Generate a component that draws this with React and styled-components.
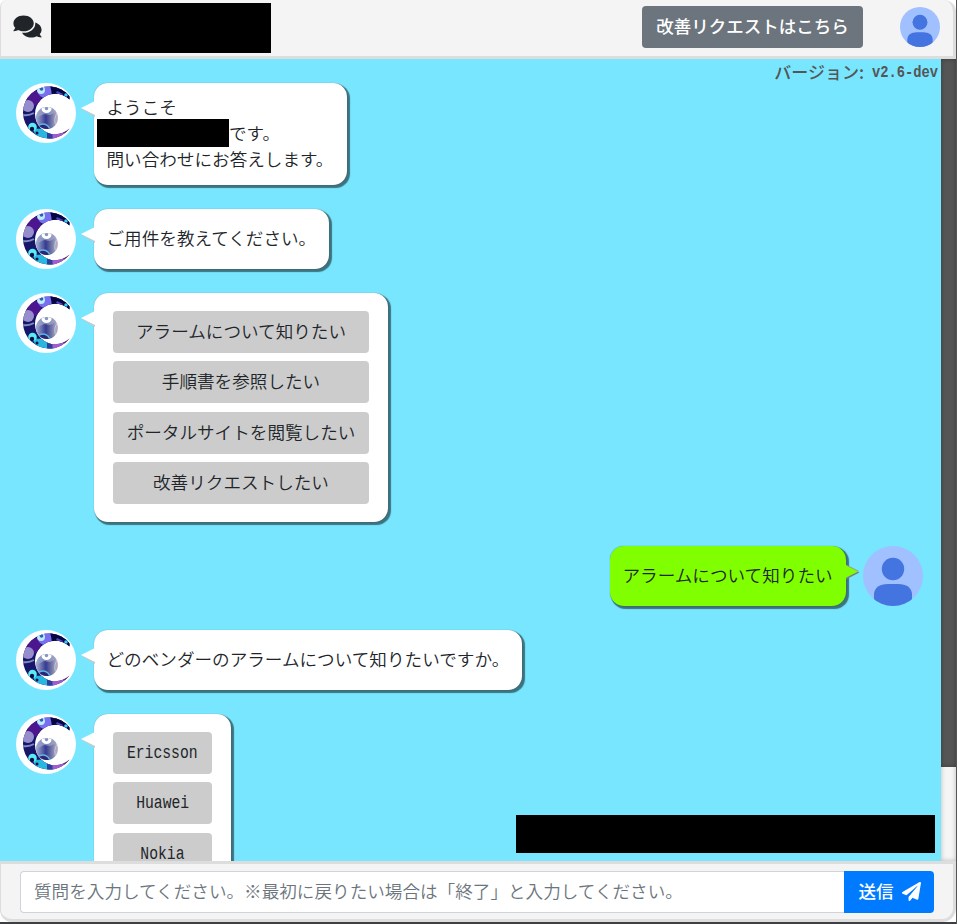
import React from 'react';
import styled, { createGlobalStyle, css } from 'styled-components';
import { FaComments, FaPaperPlane } from 'react-icons/fa';

const GlobalStyle = createGlobalStyle`
  *, *::before, *::after { box-sizing: border-box; }
  body {
    margin: 0;
    background: #4a4a4a;
    color: #212529;
    font-family: 'Noto Sans CJK JP', 'Noto Sans', sans-serif;
    font-size: 17.6px;
    font-weight: 350;
    line-height: 26px;
    overflow: hidden;
  }
  button, input { font: inherit; }
`;

const Page = styled.div`
  width: 957px;
  height: 924px;
  padding-right: 1px;
  display: flex;
  flex-direction: column;
  background: linear-gradient(#fff 0 922px, #3d3f42 922px) no-repeat 0 0 / 956px 924px, #555;
`;

const Header = styled.header`
  height: 59px;
  flex: none;
  display: flex;
  align-items: center;
  padding: 0 13px 3px 12px;
  background: #f4f4f4;
  border: solid #ddd;
  border-width: 0 3px 3px 1px;
  border-radius: 7px 12px 0 0;
`;

const ChatMark = styled(FaComments)`
  width: 29px;
  height: 25px;
  flex: none;
`;

const Redaction = styled.span`
  display: block;
  flex: none;
  width: ${(p) => p.$w}px;
  height: ${(p) => p.$h}px;
  background: #000;
`;

const TitleRedaction = styled(Redaction)`
  margin: 3px auto 0 9px;
`;

const RequestButton = styled.button`
  width: 221px;
  height: 42px;
  margin-right: 37px;
  padding: 0 0 1px;
  border: 0;
  border-radius: 4px;
  background: #6c757d;
  color: #fff;
  font-size: 17.5px;
  font-weight: 500;
  white-space: nowrap;
`;

const Chat = styled.main`
  height: 802px;
  flex: none;
  display: flex;
  position: relative;
`;

const Messages = styled.div`
  width: 941px;
  height: 802px;
  overflow: hidden;
  padding: 24px 18px 0 16px;
  background: #78e6ff;
  display: flex;
  flex-direction: column;
  gap: 24px;
`;

const Scrollbar = styled.div`
  width: 15px;
  height: 802px;
  background: #f5f5f5;
  box-shadow: inset 0 0 5px rgba(0, 0, 0, 0.25);
`;

const Thumb = styled.div`
  height: 708px;
  background: #555;
  box-shadow: inset 0 0 5px rgba(0, 0, 0, 0.3);
`;

const Version = styled.div`
  position: absolute;
  top: -2px;
  right: 18px;
  display: flex;
  align-items: center;
  color: #555;
  font-size: 17px;
  font-weight: 500;
`;

const VersionNumber = styled.span`
  width: 66px;
  margin-left: 8px;
  white-space: nowrap;
`;

const Row = styled.div`
  flex: none;
  display: flex;
  align-items: flex-start;
  gap: ${(p) => (p.$user ? 17 : 18)}px;
  justify-content: ${(p) => (p.$user ? 'flex-end' : 'flex-start')};
`;

const Bubble = styled.div`
  position: relative;
  width: ${(p) => p.$w}px;
  height: ${(p) => p.$h || 60}px;
  padding: ${(p) => p.$pad || '15.5px 12.5px'};
  border-radius: 14px;
  background: ${(p) => (p.$user ? '#7fff00' : '#fff')};
  box-shadow: 2px 2px 1px 0.5px rgba(0, 0, 0, 0.5), 0 0 1px rgba(0, 0, 0, 0.4);
  white-space: nowrap;
`;

const Tail = styled.svg`
  position: absolute;
  top: 17px;
  width: 15px;
  height: 17px;
  ${(p) => (p.$user ? css`right: -14px;` : css`left: -14px;`)}
`;

const WelcomeLine = styled.div`
  height: 26px;
`;

const NameLine = styled.div`
  height: 26px;
  display: flex;
  margin-left: -9.5px;
`;

const Options = styled.div`
  display: flex;
  flex-direction: column;
  gap: 8.8px;
`;

const Option = styled.button`
  height: 41.7px;
  flex: none;
  padding: 0 0 2px;
  border: 0;
  border-radius: 4px;
  background: #ccc;
  color: #212529;
`;

const Narrow = styled.span`
  display: inline-block;
  font-family: 'Liberation Mono', monospace;
  font-size: ${(p) => (p.$bold ? '17px' : '17.6px')};
  font-weight: ${(p) => (p.$bold ? 700 : 400)};
  transform: scaleX(${(p) => (p.$bold ? 0.81 : 0.836)});
  transform-origin: ${(p) => (p.$bold ? 'left' : 'center')};
`;

const NameRedaction = styled(Redaction)`
  margin-top: -1px;
`;

const NoticeRedaction = styled(Redaction)`
  position: absolute;
  left: 516px;
  top: 756px;
`;

const Footer = styled.footer`
  height: 61px;
  flex: none;
  display: flex;
  padding: 7px 19px 0;
  background: #f4f4f4;
  border: solid #ddd;
  border-width: 3px 3px 3px 1px;
  border-radius: 0 0 14px 12px;
`;

const MessageInput = styled.input`
  width: 824px;
  height: 42px;
  padding: 0 13px 3px;
  border: 1px solid #ced4da;
  border-right: 0;
  border-radius: 4px 0 0 4px;
  background: #fff;
  outline: 0;
  &::placeholder { color: #6c757d; opacity: 1; }
`;

const SendButton = styled.button`
  width: 90px;
  height: 42px;
  flex: none;
  display: flex;
  align-items: center;
  justify-content: center;
  gap: 8px;
  padding: 0 0 2px 1px;
  border: 0;
  border-radius: 0 4px 4px 0;
  background: #007bff;
  color: #fff;
  font-weight: 500;
  svg { width: 19px; height: 19px; }
`;

const AvatarSvg = styled.svg`
  display: block;
  flex: none;
  width: ${(p) => p.$size}px;
  height: ${(p) => p.$size}px;
`;

const UserAvatar = ({ size }) => (
  <AvatarSvg $size={size} viewBox="0 0 60 60">
    <defs><clipPath id="user-disc"><circle cx="30" cy="30" r="30" /></clipPath></defs>
    <circle cx="30" cy="30" r="30" fill="#a0c0ff" />
    <g fill="#4374e0" clipPath="url(#user-disc)">
      <circle cx="30" cy="23" r="11.2" />
      <path d="M11 60V48Q12 38 25 38H35Q48 38 49 48V60Z" />
    </g>
  </AvatarSvg>
);

const BotAvatar = () => (
  <AvatarSvg $size={60} viewBox="0 0 60 60">
    <defs>
      <clipPath id="crescent"><path d="M53.5 13.5A26 26 0 1 0 53.5 45.5A20.3 20.3 0 1 1 53.5 16.5Z" /></clipPath>
      <clipPath id="orb"><circle cx="31" cy="35" r="11" /></clipPath>
      <linearGradient id="orb-fill" x1="0" x2="1">
        <stop offset="0" stopColor="#a5b0d2" /><stop offset=".45" stopColor="#353a90" />
        <stop offset=".7" stopColor="#7075a4" /><stop offset="1" stopColor="#ceb4ce" />
      </linearGradient>
    </defs>
    <circle cx="30" cy="30" r="30" fill="#fff" />
    <g clipPath="url(#crescent)">
      <rect width="60" height="60" fill="#17166b" />
      <circle cx="17" cy="15" r="8" fill="#4b168e" />
      <circle cx="12" cy="23" r="6" fill="#968dcd" />
      <circle cx="29" cy="8" r="7" fill="#786ff0" />
      <circle cx="25" cy="7" r="4" fill="#b9edff" />
      <circle cx="25.5" cy="6" r="1.8" fill="#395ab5" />
      <path d="M34 2L36 11L46 14L54 17L55 6Z" fill="#060642" />
      <path d="M41 8L47 11L45 13L40 10Z" fill="#5347c5" />
      <circle cx="50" cy="12" r="1.8" fill="#32cfff" />
      <path d="M7 32Q13 33 18 30" fill="none" stroke="#7f8bbb" strokeWidth="2" />
      <path d="M17 46L22 60H40V45Z" fill="#28b8df" />
      <circle cx="16.5" cy="44" r="4.3" fill="#58edf1" />
      <circle cx="16" cy="46" r="2.2" fill="#07104f" />
      <circle cx="21" cy="50" r="1.5" fill="#07104f" />
      <path d="M31 48H37V58H31Z" fill="#303d9e" />
      <path d="M36 48L55 42L48 59H37Z" fill="#a45bd0" />
      <path d="M47 49L56 42L49 53Z" fill="#552879" />
    </g>
    <g clipPath="url(#orb)">
      <rect x="20" y="23" width="22" height="24" fill="url(#orb-fill)" />
      <path d="M20 23H42V28L34 32L28 31L20 35Z" fill="#9da8cc" opacity=".7" />
      <ellipse cx="30.5" cy="26" rx="5" ry="4" fill="#fff" />
      <circle cx="30.5" cy="25.5" r="1.7" fill="#8794c1" />
      <circle cx="27" cy="48" r="7" fill="#2c2775" stroke="#5eb4e8" strokeWidth="1.5" />
      <path d="M42 29Q36 36 41 45" fill="none" stroke="#a8d6df" />
    </g>
  </AvatarSvg>
);

const BubbleTail = ({ user }) => (
  <Tail $user={user} viewBox="0 0 15 17">
    {user ? (
      <>
        <path d="M1 3.5L14.5 9.5L1 16.5Z" fill="#708784" />
        <path d="M1 1.5L14 8L1 15Z" fill="#8da287" />
        <path d="M0 2L13 8.5L0 15Z" fill="#7fff00" />
      </>
    ) : (
      <>
        <path d="M1 8.5L15 3V17Z" fill="#c5c9ca" />
        <path d="M1 8L15 1V15Z" fill="#fff" />
      </>
    )}
  </Tail>
);

const BotMessage = ({ width, height, pad, children }) => (
  <Row>
    <BotAvatar />
    <Bubble $w={width} $h={height} $pad={pad}>
      <BubbleTail />
      {children}
    </Bubble>
  </Row>
);

const topics = ['アラームについて知りたい', '手順書を参照したい', 'ポータルサイトを閲覧したい', '改善リクエストしたい'];
const vendors = ['Ericsson', 'Huawei', 'Nokia'];

export default function App() {
  return (
    <>
      <GlobalStyle />
      <Page>
        <Header>
          <ChatMark />
          <TitleRedaction $w={220} $h={50} />
          <RequestButton>改善リクエストはこちら</RequestButton>
          <UserAvatar size={40} />
        </Header>
        <Chat>
          <Messages>
            <BotMessage width={253} height={102} pad="11px 12.5px">
              <WelcomeLine>ようこそ</WelcomeLine>
              <NameLine><NameRedaction $w={132} $h={28} />です。</NameLine>
              <WelcomeLine>問い合わせにお答えします。</WelcomeLine>
            </BotMessage>
            <BotMessage width={235}>ご用件を教えてください。</BotMessage>
            <BotMessage width={294} height={229} pad="18px 19px">
              <Options>{topics.map((t) => <Option key={t}>{t}</Option>)}</Options>
            </BotMessage>
            <Row $user>
              <Bubble $user $w={236}><BubbleTail user />アラームについて知りたい</Bubble>
              <UserAvatar size={60} />
            </Row>
            <BotMessage width={428}>どのベンダーのアラームについて知りたいですか。</BotMessage>
            <BotMessage width={137} height={229} pad="18px 19px">
              <Options>{vendors.map((v) => <Option key={v}><Narrow>{v}</Narrow></Option>)}</Options>
            </BotMessage>
          </Messages>
          <Scrollbar><Thumb /></Scrollbar>
          <Version>バージョン:<VersionNumber><Narrow $bold>v2.6-dev</Narrow></VersionNumber></Version>
          <NoticeRedaction $w={419} $h={38} />
        </Chat>
        <Footer>
          <MessageInput placeholder="質問を入力してください。※最初に戻りたい場合は「終了」と入力してください。" />
          <SendButton>送信<FaPaperPlane /></SendButton>
        </Footer>
      </Page>
    </>
  );
}
